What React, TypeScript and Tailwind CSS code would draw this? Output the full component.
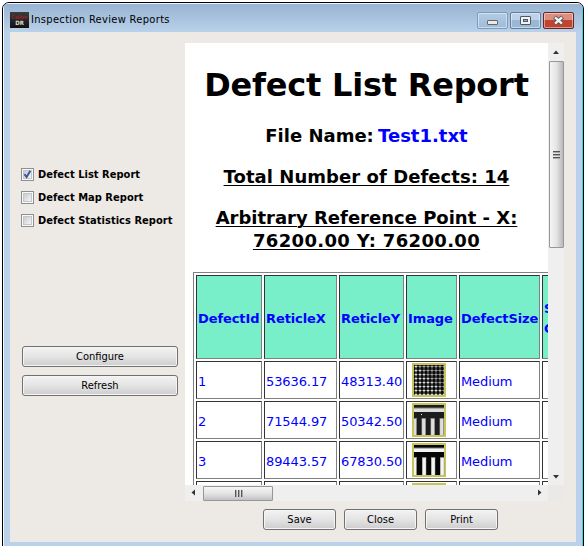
import type { ReactNode } from "react";

const ui = "font-['DejaVu_Sans_Condensed','DejaVu_Sans',sans-serif] text-[11px] leading-[14px]";

function PushButton({ children, className }: { children: ReactNode; className: string }) {
  return (
    <button
      className={`flex h-[21px] items-center justify-center rounded-[3px] border border-[#707070] bg-linear-to-b from-[#f3f3f3] from-0% via-[#e4e4e4] via-50% to-[#cdcdcd] text-black shadow-[inset_0_0_0_1px_#f5f5f5] ${className}`}
    >
      {children}
    </button>
  );
}

function Check({ label, checked }: { label: string; checked?: boolean }) {
  return (
    <label className="-ml-px flex h-[23px] items-center gap-1 font-bold tracking-[0.03px]">
      <svg width="13" height="13" viewBox="0 0 13 13">
        <defs>
          <linearGradient id="box" x1="0" y1="0" x2="1" y2="1">
            <stop offset="0" stopColor="#c4c8cc" />
            <stop offset="1" stopColor="#f8f8f8" />
          </linearGradient>
        </defs>
        <rect x=".5" y=".5" width="12" height="12" fill="#f8f8f8" stroke="#8e8f8f" />
        <rect x="2.5" y="2.5" width="8" height="8" fill="url(#box)" stroke="#c3c7cb" />
        {checked && <path d="M3.4 6.2L5.6 9L9.3 2.8" fill="none" stroke="#3c53a0" strokeWidth="1.9" />}
      </svg>
      <span>{label}</span>
    </label>
  );
}

function GridImage() {
  const steps = [0, 1, 2, 3, 4, 5, 6, 7];
  return (
    <svg className="block" width="34" height="34" viewBox="0 0 34 34">
      <rect width="34" height="34" fill="#c8c35a" />
      <rect x="2" y="2" width="30" height="30" fill="#0c0c0c" />
      {steps.map((r) => (
        <g key={r}>
          <path d={`M2 ${3.5 + r * 4}h30M${4 + r * 4} 2v30`} stroke="#5c5c5c" strokeWidth="1" />
          {steps.map((c) => (
            <rect key={c} x={3.2 + c * 4} y={2.8 + r * 4} width="1.6" height="1.6" fill="#fff" />
          ))}
        </g>
      ))}
      <rect x="1" y="1" width="32" height="32" fill="none" stroke="#c8c35a" strokeWidth="2" />
    </svg>
  );
}

function CombImage({ variant }: { variant: "soft" | "sharp" }) {
  const soft = variant === "soft";
  const dark = soft ? "#1d1d1d" : "#050505";
  const light = soft ? "#dedede" : "#f4f4f4";
  const top = soft ? 15 : 14;
  const bars = soft ? [2, 9.5, 18.5, 27.5] : [2, 10, 19, 28];
  return (
    <svg className="block" width="34" height="34" viewBox="0 0 34 34">
      <rect width="34" height="34" fill="#c8c35a" />
      <rect x="2" y="2" width="30" height="30" fill={dark} />
      <rect x="2" y="4.5" width="30" height="1.5" fill="#777" />
      <rect x="2" y="5.5" width="30" height="3.5" fill={light} />
      {bars.map((x, i) => (
        <g key={x}>
          <rect x={x} y={top} width={i === 0 ? 3 : 4.3} height={32 - top} fill="#888" />
          <rect x={i === 0 ? x : x + 0.6} y={top + 1} width={i === 0 ? 2 : 3.2} height={31 - top} fill={light} />
        </g>
      ))}
      {soft && <rect x="9" y="11" width="1" height="1" fill="#fff" />}
    </svg>
  );
}

const edge = "border border-t-[#333] border-l-[#333] border-r-[#808080] border-b-[#808080]";

function Head({ children }: { children?: ReactNode }) {
  return (
    <div className={`flex items-center bg-[#78efc8] pt-[3px] pl-px font-bold tracking-[-0.1px] ${edge}`}>{children}</div>
  );
}

function Cell({ children }: { children?: ReactNode }) {
  return <div className={`flex items-center pt-[3px] pl-px tracking-[-0.1px] ${edge}`}>{children}</div>;
}

const rows: { id: string; x: string; y: string; size: string; image: ReactNode }[] = [
  { id: "1", x: "53636.17", y: "48313.40", size: "Medium", image: <GridImage /> },
  { id: "2", x: "71544.97", y: "50342.50", size: "Medium", image: <CombImage variant="soft" /> },
  { id: "3", x: "89443.57", y: "67830.50", size: "Medium", image: <CombImage variant="sharp" /> },
  { id: "", x: "", y: "", size: "", image: <CombImage variant="sharp" /> },
];

const columns = "grid grid-cols-[66px_73px_65px_51px_81px_80px] gap-0.5";

function Report() {
  return (
    <div className="h-[442px] w-[363px] overflow-hidden bg-white pl-2 font-['DejaVu_Sans',sans-serif]">
      <div className="w-[347px] text-center text-[18px] leading-[23px] font-bold whitespace-nowrap text-black">
        <h1 className="mt-[22px] text-[32px] leading-[40px] tracking-[-0.22px]">Defect List Report</h1>
        <p className="mt-[19px]">
          File Name: <span className="-ml-0.5 text-[#0000ff]">Test1.txt</span>
        </p>
        <p className="mt-[18px] tracking-[0.05px] underline decoration-1 underline-offset-2">Total Number of Defects: 14</p>
        <p className="mt-[18px] underline decoration-1 underline-offset-2">
          Arbitrary Reference Point - X:
          <br />
          <span className="tracking-[0.35px]">76200.00 Y: 76200.00</span>
        </p>
      </div>
      <div className="mt-[20px] flex w-[423px] flex-col gap-0.5 border border-[#808080] p-0.5 text-[13px] leading-[20px] text-[#0000ff]">
        <div className={`${columns} h-[84px]`}>
          <Head>DefectId</Head>
          <Head>ReticleX</Head>
          <Head>ReticleY</Head>
          <Head>Image</Head>
          <Head>DefectSize</Head>
          <Head>
            <span>
              S<br />C
            </span>
          </Head>
        </div>
        {rows.map((r, i) => (
          <div key={i} className={`${columns} h-[38px]`}>
            <Cell>{r.id}</Cell>
            <Cell>{r.x}</Cell>
            <Cell>{r.y}</Cell>
            <div className={`pt-px pl-[5px] ${edge}`}>{r.image}</div>
            <Cell>{r.size}</Cell>
            <Cell />
          </div>
        ))}
      </div>
    </div>
  );
}

function VerticalBar() {
  return (
    <div className="flex h-[442px] w-4 flex-col items-center bg-[#efefef]">
      <svg width="16" height="18" viewBox="0 0 16 18">
        <path d="M5 11L8 7.5L11 11Z" fill="#333" />
      </svg>
      <div className="flex h-[187px] w-[15px] flex-col items-center justify-center gap-0.5 rounded-[1px] border border-[#979797] bg-linear-to-r from-[#f5f5f5] via-[#e4e4e6] to-[#b9b9bd]">
        {[0, 1, 2].map((i) => (
          <i key={i} className="h-px w-[7px] bg-[#555] shadow-[0_1px_0_#aaa]" />
        ))}
      </div>
      <svg className="mt-auto" width="16" height="18" viewBox="0 0 16 18">
        <path d="M5 8L8 11.5L11 8Z" fill="#333" />
      </svg>
    </div>
  );
}

function HorizontalBar() {
  return (
    <div className="flex h-4 w-[363px] items-center bg-[#efefef]">
      <svg width="18" height="16" viewBox="0 0 18 16">
        <path d="M10 4.5L6.5 7.5L10 10.5Z" fill="#333" />
      </svg>
      <div className="flex h-[15px] w-[70px] items-center justify-center gap-0.5 rounded-[1px] border border-[#979797] bg-linear-to-b from-[#f5f5f5] via-[#e4e4e6] to-[#c2c2c5]">
        {[0, 1, 2].map((i) => (
          <i key={i} className="h-[7px] w-px bg-[#555] shadow-[1px_0_0_#aaa]" />
        ))}
      </div>
      <svg className="ml-auto" width="18" height="16" viewBox="0 0 18 16">
        <path d="M8 4.5L11.5 7.5L8 10.5Z" fill="#333" />
      </svg>
    </div>
  );
}

function Caption() {
  const box = "flex h-[17px] w-[31px] items-center justify-center rounded-[2px] border shadow-[inset_0_0_0_1px_rgba(255,255,255,0.45)]";
  return (
    <header className="flex h-[28px] items-start bg-linear-to-b from-[#98b4d2] to-[#b9d1ea] pl-[6px]">
      <div className="mt-[8px] flex h-4 w-[19px] flex-col items-center bg-linear-to-b from-[#3c3c3c] to-[#111]">
        <span className="mt-[2px] h-[6px] text-[5px] leading-[6px] text-[#d81f26]">Calibre</span>
        <span className="text-[6px] leading-[6px] font-bold text-[#ddd]">DR</span>
      </div>
      <h2 className="mt-[9px] ml-[2px] tracking-[0.33px] text-black">Inspection Review Reports</h2>
      <div className="mt-[8px] mr-[8px] ml-auto flex gap-0.5">
        <div className={`${box} border-[#7f9bb8] bg-linear-to-b from-[#b4cbe4] to-[#9fbbd8]`}>
          <svg width="12" height="12" viewBox="0 0 12 12">
            <rect x=".5" y="5.5" width="10" height="4" rx=".5" fill="#eee9dc" stroke="#5d6872" />
          </svg>
        </div>
        <div className={`${box} border-[#607d9b] bg-linear-to-b from-[#bdd2e8] from-45% to-[#9ab8d6] to-50%`}>
          <svg width="11" height="11" viewBox="0 0 11 11">
            <rect x=".5" y="1.5" width="10" height="8" rx=".5" fill="#f2f2ee" stroke="#4e5967" />
            <rect x="3.5" y="4.5" width="4" height="2" fill="#8fb0d2" stroke="#4e5967" />
          </svg>
        </div>
        <div className={`${box} border-[#6b2420] bg-linear-to-b from-[#dc8f81] from-45% to-[#c1442f] to-50%`}>
          <svg width="13" height="11" viewBox="0 0 13 11">
            <path d="M2.5 2L10.5 9M10.5 2L2.5 9" stroke="#53505a" strokeWidth="4.3" />
            <path d="M3 2.4L10 8.6M10 2.4L3 8.6" stroke="#f5f3f1" strokeWidth="2.4" />
          </svg>
        </div>
      </div>
    </header>
  );
}

export default function App() {
  return (
    <div className={`h-[546px] w-[585px] overflow-hidden bg-white pt-[2px] pl-[2px] ${ui}`}>
      <div className="h-[560px] w-[582px] overflow-hidden rounded-t-[7px] border border-black bg-[#b9d1ea]">
        <div className="h-full border-t border-r border-l border-t-[#eef4fa] border-r-[#35d5f0] border-l-[#f4f8fc]">
          <Caption />
          <div className="mr-[6px] ml-[6px] flex h-[510px] bg-[#ede9e4] pt-[11px] pl-3">
            <aside className="flex w-[163px] flex-col pt-[120px]">
              <Check label="Defect List Report" checked />
              <Check label="Defect Map Report" />
              <Check label="Defect Statistics Report" />
              <PushButton className="mt-[114px] w-[156px]">Configure</PushButton>
              <PushButton className="mt-2 w-[156px]">Refresh</PushButton>
            </aside>
            <main>
              <div className="flex">
                <Report />
                <VerticalBar />
              </div>
              <div className="flex">
                <HorizontalBar />
                <div className="h-4 w-4 bg-[#ebe9e7]" />
              </div>
              <div className="flex gap-2 pt-2 pl-[78px]">
                <PushButton className="w-[73px]">Save</PushButton>
                <PushButton className="w-[73px]">Close</PushButton>
                <PushButton className="w-[73px]">Print</PushButton>
              </div>
            </main>
          </div>
        </div>
      </div>
    </div>
  );
}
